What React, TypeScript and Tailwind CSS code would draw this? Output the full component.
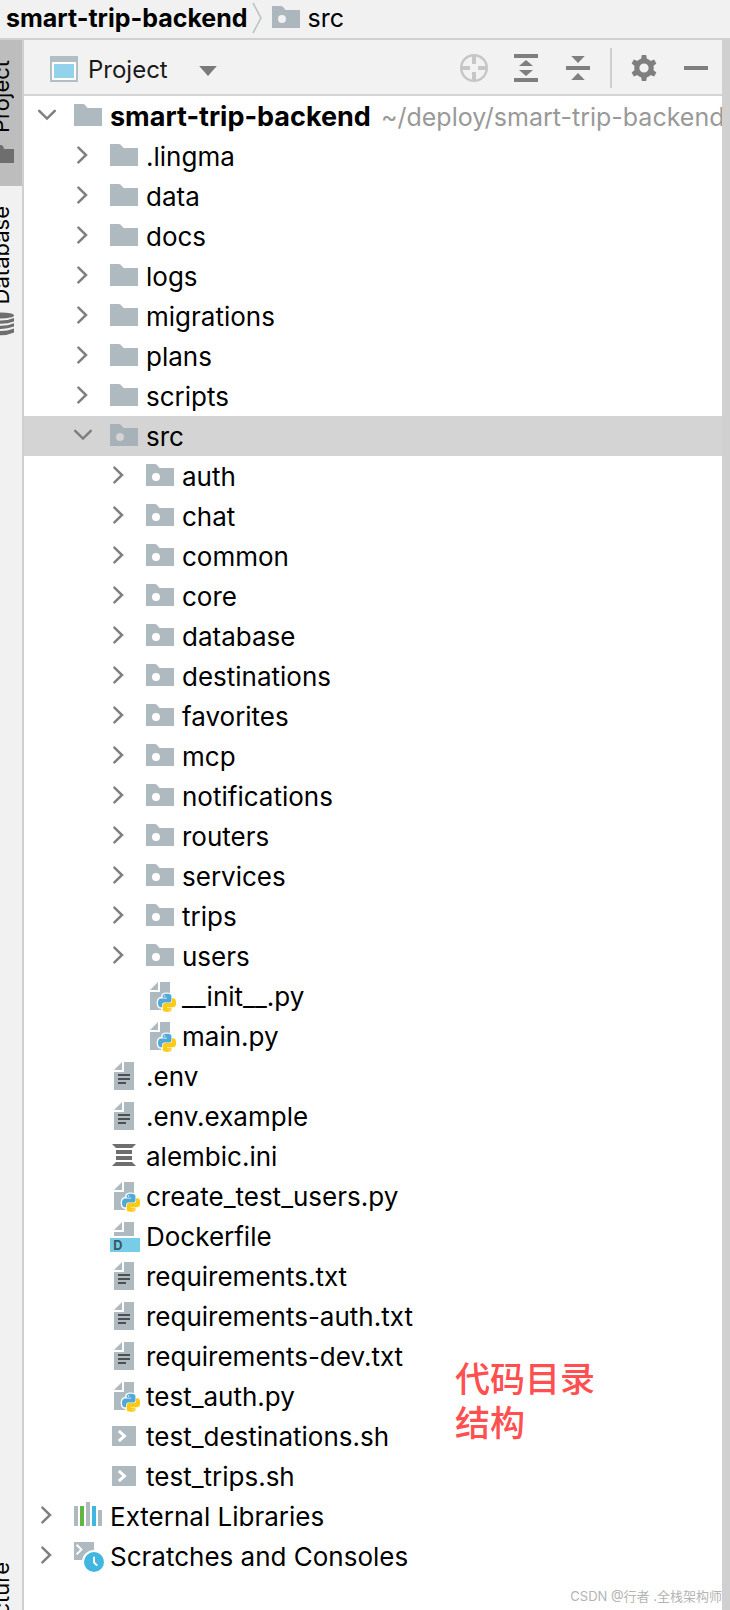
import { useState, type ReactNode } from "react";

type IconName =
  | "folder"
  | "source"
  | "python"
  | "text"
  | "config"
  | "docker"
  | "shell"
  | "libraries"
  | "scratches";

type TreeNode = {
  name: string;
  icon: IconName;
  location?: string;
  expandable?: boolean;
  children?: TreeNode[];
};

const folder = (name: string): TreeNode => ({ name, icon: "folder", expandable: true });
const source = (name: string): TreeNode => ({ name, icon: "source", expandable: true });

const tree: TreeNode[] = [
  {
    name: "smart-trip-backend",
    icon: "folder",
    location: "~/deploy/smart-trip-backend",
    expandable: true,
    children: [
      folder(".lingma"),
      folder("data"),
      folder("docs"),
      folder("logs"),
      folder("migrations"),
      folder("plans"),
      folder("scripts"),
      {
        name: "src",
        icon: "source",
        expandable: true,
        children: [
          source("auth"),
          source("chat"),
          source("common"),
          source("core"),
          source("database"),
          source("destinations"),
          source("favorites"),
          source("mcp"),
          source("notifications"),
          source("routers"),
          source("services"),
          source("trips"),
          source("users"),
          { name: "__init__.py", icon: "python" },
          { name: "main.py", icon: "python" },
        ],
      },
      { name: ".env", icon: "text" },
      { name: ".env.example", icon: "text" },
      { name: "alembic.ini", icon: "config" },
      { name: "create_test_users.py", icon: "python" },
      { name: "Dockerfile", icon: "docker" },
      { name: "requirements.txt", icon: "text" },
      { name: "requirements-auth.txt", icon: "text" },
      { name: "requirements-dev.txt", icon: "text" },
      { name: "test_auth.py", icon: "python" },
      { name: "test_destinations.sh", icon: "shell" },
      { name: "test_trips.sh", icon: "shell" },
    ],
  },
  { name: "External Libraries", icon: "libraries", expandable: true },
  { name: "Scratches and Consoles", icon: "scratches", expandable: true },
];

const indent = ["pl-[6px]", "pl-[42px]", "pl-[78px]"];

function Icon({ children, className = "" }: { children: ReactNode; className?: string }) {
  return (
    <svg viewBox="0 0 16 16" className={`size-8 shrink-0 ${className}`} aria-hidden="true">
      {children}
    </svg>
  );
}

const FOLDER = "M1 2H5.4Q6.1 2 6.6 2.6L7.8 4H15V13H1Z";
const DOT = "M6 6.5a2 2 0 1 0 0 4a2 2 0 1 0 0-4Z";

function NodeIcon({ name }: { name: IconName }) {
  switch (name) {
    case "folder":
      return (
        <Icon>
          <path d={FOLDER} fill="#aeb9c0" />
        </Icon>
      );
    case "source":
      return (
        <Icon>
          <path d={FOLDER + DOT} fill="#9aa7b0" fillOpacity=".8" fillRule="evenodd" />
        </Icon>
      );
    case "python":
      return (
        <Icon>
          <path d="M7 1L3 5H7ZM8 1H13V15H3V6H8Z" fill="#aeb9c0" />
          <g transform="translate(7 6.9) scale(.0355)">
            <g stroke="#fff" strokeWidth="40" strokeLinejoin="round" fill="#fff">
              <path d={PY_TOP} />
              <path d={PY_BOTTOM} />
            </g>
            <path d={PY_TOP} fill="#4fa8d8" />
            <path d={PY_BOTTOM} fill="#ffcb12" />
          </g>
        </Icon>
      );
    case "text":
      return (
        <Icon>
          <path d="M7 1L3 5H7ZM8 1H13V15H3V6H8Z" fill="#aeb9c0" />
          <path d="M5 7H11V8H5ZM5 9H11V10H5ZM5 11H9V12H5Z" fill="#4c5053" />
        </Icon>
      );
    case "config":
      return (
        <Icon>
          <path d="M2 2H14L12 4H4ZM4 5H12V7H4ZM4 8H12V10H4ZM4 11H12L14 13H2Z" fill="#6e6e6e" />
        </Icon>
      );
    case "docker":
      return (
        <Icon>
          <path d="M7 1L3 5H7ZM8 1H13V8H3V6H8Z" fill="#aeb9c0" />
          <path d="M1 9H16V16H1Z" fill="#77cce8" />
          <text x="2.6" y="14.8" fontSize="6.4" fontWeight="700" fill="#3b5660">
            D
          </text>
        </Icon>
      );
    case "shell":
      return (
        <Icon>
          <path d="M2 3H14V13H2Z" fill="#aeb9c0" />
          <path d="M5.4 5.4L8.2 8L5.4 10.6" fill="none" stroke="#fff" strokeWidth="1.5" />
        </Icon>
      );
    case "libraries":
      return (
        <Icon>
          <path d="M1 3H3V13H1ZM7 1H9V13H7ZM13 5H15V13H13Z" fill="#aeb9c0" />
          <path d="M4 3H6V13H4Z" fill="#62b543" />
          <path d="M10 3H12V13H10Z" fill="#40b6e0" />
        </Icon>
      );
    case "scratches":
      return (
        <Icon>
          <path d="M1 1H11V10H1Z" fill="#aeb9c0" />
          <path d="M2.3 2.4L4.7 4.8L2.3 7.2" fill="none" stroke="#fff" />
          <circle cx="11" cy="11" r="6" fill="#fff" />
          <circle cx="11" cy="11" r="5" fill="#40b6e0" />
          <path d="M11 8.4V11.2L12.6 12.8" fill="none" stroke="#fff" />
        </Icon>
      );
  }
}

const PY_TOP =
  "M126.9.1c-64.8 0-60.8 28.1-60.8 28.1l.1 29.1h61.9v8.7H41.6S.1 61.4.1 126.8c0 65.4 36.2 63.1 36.2 63.1H58v-30.4s-1.2-36.2 35.6-36.2H155s34.5.6 34.5-33.3V34S194.7.1 126.9.1ZM92.8 19.7a11.1 11.1 0 1 1 0 22.2a11.1 11.1 0 1 1 0-22.2Z";
const PY_BOTTOM =
  "M128.8 254.1c64.8 0 60.8-28.1 60.8-28.1l-.1-29.1h-61.9v-8.7H214s41.5 4.7 41.5-60.7c0-65.4-36.2-63.1-36.2-63.1h-21.6v30.4s1.2 36.2-35.6 36.2h-61.4s-34.5-.6-34.5 33.3v56s-5.2 33.7 62.6 33.7ZM162.9 234.5a11.1 11.1 0 1 1 0-22.2a11.1 11.1 0 1 1 0 22.2Z";

function Chevron({ open }: { open: boolean }) {
  return (
    <Icon>
      <path
        d={open ? "M4.6 5.4L8.5 9.3L12.4 5.4" : "M6.2 3.8L10 7.5L6.2 11.2"}
        fill="none"
        stroke="#7f7f7f"
        strokeWidth="1.25"
        strokeLinecap="round"
      />
    </Icon>
  );
}

type BranchProps = {
  nodes: TreeNode[];
  depth: number;
  selected: string;
  onSelect: (name: string) => void;
};

function Branch({ nodes, depth, selected, onSelect }: BranchProps) {
  const [closed, setClosed] = useState<string[]>([]);

  const toggle = (node: TreeNode) => {
    onSelect(node.name);
    if (!node.children) return;
    setClosed((prev) =>
      prev.includes(node.name) ? prev.filter((n) => n !== node.name) : [...prev, node.name],
    );
  };

  return (
    <ul>
      {nodes.map((node) => {
        const open = !!node.children && !closed.includes(node.name);
        return (
          <li key={node.name}>
            <button
              type="button"
              onClick={() => toggle(node)}
              aria-expanded={node.expandable ? open : undefined}
              className={`flex h-10 w-full items-center overflow-hidden text-left whitespace-nowrap ${indent[depth]} ${
                selected === node.name ? "bg-[#d4d4d4]" : ""
              }`}
            >
              {node.expandable ? <Chevron open={open} /> : <span className="size-8 shrink-0" />}
              <span className="ml-[10px] flex items-center gap-[6px]">
                <NodeIcon name={node.icon} />
                <span className={`pt-[2px] leading-8 ${node.location ? "text-[27px] font-bold" : ""}`}>
                  {node.name}
                </span>
                {node.location && (
                  <span className="ml-1 pt-[2px] text-[25px] leading-8 text-[#999999]">{node.location}</span>
                )}
              </span>
            </button>
            {open && node.children && (
              <Branch nodes={node.children} depth={depth + 1} selected={selected} onSelect={onSelect} />
            )}
          </li>
        );
      })}
    </ul>
  );
}

function Breadcrumb() {
  return (
    <nav className="flex h-10 items-center border-b-2 border-[#d0d0d0] bg-[#f1f1f1] pb-[2px] pl-[6px] text-[25px] leading-8">
      <a href="#root" className="font-bold">
        smart-trip-backend
      </a>
      <svg viewBox="0 0 10 32" className="ml-1 h-8 w-[10px]" aria-hidden="true">
        <path d="M1 1L9 16L1 31" fill="none" stroke="#bcc3c8" strokeWidth="1.6" />
      </svg>
      <a href="#src" className="ml-2 flex items-center gap-[6px]">
        <NodeIcon name="source" />
        src
      </a>
    </nav>
  );
}

function SideStripe() {
  return (
    <aside className="flex w-6 shrink-0 justify-end overflow-hidden border-r-2 border-[#cfcfcf] bg-[#f1f1f1] text-[22px]">
      <div className="flex w-[42px] shrink-0 flex-col">
        <button type="button" className="flex h-[146px] flex-col items-center gap-3 bg-[#bdbdbd] pt-5">
          <span className="rotate-180 leading-7 [writing-mode:vertical-rl]">Project</span>
          <svg viewBox="0 0 26 18" className="h-[18px] w-[26px]" aria-hidden="true">
            <path d="M0 0H13Q14.5 0 15.5 2L16 4H26V18H0Z" fill="#6e6e6e" />
          </svg>
        </button>
        <button type="button" className="flex flex-col items-center gap-2 pt-5">
          <span className="rotate-180 leading-7 [writing-mode:vertical-rl]">Database</span>
          <svg viewBox="0 0 26 24" className="h-6 w-[26px]" aria-hidden="true">
            <ellipse cx="13" cy="3.4" rx="13" ry="3" fill="#6e6e6e" />
            <path
              d="M0 6Q13 11 26 6V9.4Q13 14 0 9.4ZM0 11.2Q13 16.2 26 11.2V14.6Q13 19.2 0 14.6ZM0 16.6Q13 21.6 26 16.6V20.4Q13 26 0 20.4Z"
              fill="#6e6e6e"
            />
          </svg>
        </button>
        <button type="button" className="mt-auto -mb-12 flex flex-col items-center">
          <span className="rotate-180 leading-7 [writing-mode:vertical-rl]">Structure</span>
        </button>
      </div>
    </aside>
  );
}

function ToolButton({ label, children }: { label: string; children: ReactNode }) {
  return (
    <button type="button" aria-label={label} className="text-[#7f7f7f]">
      <Icon>{children}</Icon>
    </button>
  );
}

function PanelHeader() {
  return (
    <header className="flex h-14 items-center justify-between border-b-2 border-[#d4d4d4] bg-[#f2f2f2] pt-[2px] pr-[10px] pl-6 text-[24px]">
      <button type="button" className="flex items-center gap-2 text-[#1a1a1a]">
        <Icon>
          <path d="M1 2H15V15H1Z" fill="#b3bdc4" />
          <path d="M2 5H14V14H2Z" fill="#fff" />
          <path d="M3 6H13V13H3Z" fill="#92d2ea" />
        </Icon>
        <span className="pt-1 leading-8">Project</span>
        <Icon className="ml-4">
          <path d="M3.6 7H12.4L8 12Z" fill="#7a7a7a" />
        </Icon>
      </button>
      <div className="flex items-center gap-4">
        <div className="flex items-center gap-5">
          <ToolButton label="Select Opened File">
            <g stroke="#c6c6c6" fill="none">
              <circle cx="8" cy="8" r="6.4" strokeWidth="1.2" />
              <path d="M8 1.5V6M8 10V14.5M1.5 8H6M10 8H14.5" strokeWidth="2" />
            </g>
          </ToolButton>
          <ToolButton label="Expand All">
            <path d="M2 1H14V3H2ZM4.5 7L8 4L11.5 7ZM4.5 9H11.5L8 12ZM2 13H14V15H2Z" fill="currentColor" />
          </ToolButton>
          <ToolButton label="Collapse All">
            <path d="M4.6 2H11.4L8 5.5ZM2 7H14V9H2ZM4.6 14L8 10.5L11.4 14Z" fill="currentColor" />
          </ToolButton>
        </div>
        <div className="h-10 w-[2px] bg-[#d0d0d0]" />
        <div className="flex items-center gap-5">
          <ToolButton label="Options">
            <g fill="currentColor">
              <circle cx="8" cy="8" r="3.6" fill="none" stroke="currentColor" strokeWidth="2.6" />
              {[0, 60, 120, 180, 240, 300].map((angle) => (
                <path key={angle} d="M6.9 1.5H9.1L9.6 4.4H6.4Z" transform={`rotate(${angle} 8 8)`} />
              ))}
            </g>
          </ToolButton>
          <ToolButton label="Hide">
            <path d="M2 7H14V9H2Z" fill="currentColor" />
          </ToolButton>
        </div>
      </div>
    </header>
  );
}

export default function App() {
  const [selected, setSelected] = useState("src");

  return (
    <div className="relative flex min-h-screen flex-col overflow-hidden bg-white font-[Inter,'Noto_Sans_CJK_SC',sans-serif] text-[26px] text-black">
      <Breadcrumb />
      <div className="flex min-h-0 flex-1">
        <SideStripe />
        <main className="min-w-0 flex-1">
          <PanelHeader />
          <Branch nodes={tree} depth={0} selected={selected} onSelect={setSelected} />
        </main>
        <div className="w-2 shrink-0 bg-[#d0d0d0]" />
      </div>
      <p className="absolute right-32 bottom-[165px] w-[147px] text-[35px] leading-[44px] font-medium text-[#fe5050]">
        代码目录结构
      </p>
      <p className="absolute right-2 bottom-1 text-[13px] leading-5 text-[#b4b4b4]">CSDN @行者 .全栈架构师</p>
    </div>
  );
}
